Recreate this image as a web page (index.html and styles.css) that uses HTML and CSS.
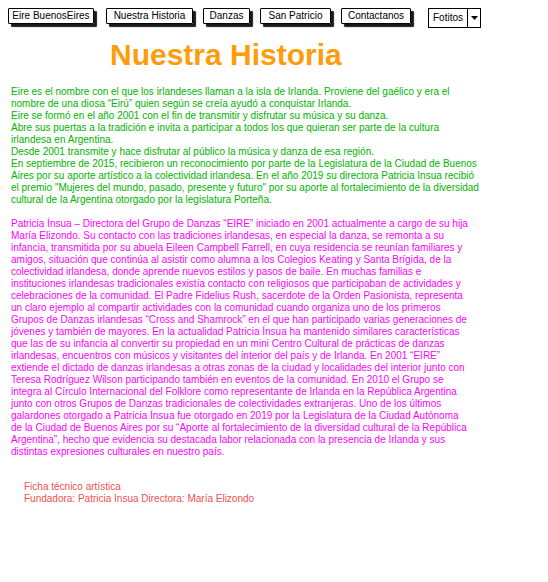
FILE: index.html
```html
<!DOCTYPE html>
<html lang="es">
<head>
<meta charset="utf-8">
<title>Nuestra Historia</title>
<link rel="stylesheet" href="styles.css">
</head>
<body>
<nav class="nav">
  <a class="btn btn-home">Eire BuenosEires</a>
  <a class="btn btn-historia">Nuestra Historia</a>
  <a class="btn btn-danzas">Danzas</a>
  <a class="btn btn-patricio">San Patricio</a>
  <a class="btn btn-contacto">Contactanos</a>
  <div class="select"><span class="select-label">Fotitos</span><span class="select-arrow"><svg width="7" height="4" viewBox="0 0 7 4"><path d="M0 0H7L3.5 4Z" fill="#000"/></svg></span></div>
</nav>
<h1 class="title">Nuestra Historia</h1>
<p class="text green">Eire es el nombre con el que los irlandeses llaman a la isla de Irlanda. Proviene del gaélico y era el<br>
nombre de una diosa “Eirú” quien según se creía ayudó a conquistar Irlanda.<br>
Eire se formó en el año 2001 con el fin de transmitir y disfrutar su música y su danza.<br>
Abre sus puertas a la tradición e invita a participar a todos los que quieran ser parte de la cultura<br>
irlandesa en Argentina.<br>
Desde 2001 transmite y hace disfrutar al público la música y danza de esa región.<br>
En septiembre de 2015, recibieron un reconocimiento por parte de la Legislatura de la Ciudad de Buenos<br>
Aires por su aporte artístico a la colectividad irlandesa. En el año 2019 su directora Patricia Insua recibió<br>
el premio "Mujeres del mundo, pasado, presente y futuro" por su aporte al fortalecimiento de la diversidad<br>
cultural de la Argentina otorgado por la legislatura Porteña.</p>
<p class="text magenta">Patricia Ínsua – Directora del Grupo de Danzas “EIRE” iniciado en 2001 actualmente a cargo de su hija<br>
María Elizondo. Su contacto con las tradiciones irlandesas, en especial la danza, se remonta a su<br>
infancia, transmitida por su abuela Eileen Campbell Farrell, en cuya residencia se reunían familiares y<br>
amigos, situación que continúa al asistir como alumna a los Colegios Keating y Santa Brígida, de la<br>
colectividad irlandesa, donde aprende nuevos estilos y pasos de baile. En muchas familias e<br>
instituciones irlandesas tradicionales existía contacto con religiosos que participaban de actividades y<br>
celebraciones de la comunidad. El Padre Fidelius Rush, sacerdote de la Orden Pasionista, representa<br>
un claro ejemplo al compartir actividades con la comunidad cuando organiza uno de los primeros<br>
Grupos de Danzas irlandesas “Cross and Shamrock” en el que han participado varias generaciones de<br>
jóvenes y también de mayores. En la actualidad Patricia Ínsua ha mantenido similares características<br>
que las de su infancia al convertir su propiedad en un mini Centro Cultural de prácticas de danzas<br>
irlandesas, encuentros con músicos y visitantes del interior del país y de Irlanda. En 2001 “EIRE”<br>
extiende el dictado de danzas irlandesas a otras zonas de la ciudad y localidades del interior junto con<br>
Teresa Rodríguez Wilson participando también en eventos de la comunidad. En 2010 el Grupo se<br>
integra al Círculo Internacional del Folklore como representante de Irlanda en la República Argentina<br>
junto con otros Grupos de Danzas tradicionales de colectividades extranjeras. Uno de los últimos<br>
galardones otorgado a Patricia Ínsua fue otorgado en 2019 por la Legislatura de la Ciudad Autónoma<br>
de la Ciudad de Buenos Aires por su “Aporte al fortalecimiento de la diversidad cultural de la República<br>
Argentina”, hecho que evidencia su destacada labor relacionada con la presencia de Irlanda y sus<br>
distintas expresiones culturales en nuestro país.</p>
<div class="credits">
  <div>Ficha técnico artística</div>
  <div>Fundadora: Patricia Insua Directora: María Elizondo</div>
</div>
</body>
</html>
```
FILE: styles.css
```css
html, body {
  background: #fff;
}
body {
  margin: 8px;
  font-family: "Liberation Sans", Arial, sans-serif;
}
.nav {
  display: flex;
  align-items: flex-start;
  gap: 10px;
}
.btn {
  display: block;
  box-sizing: border-box;
  height: 16px;
  border: 1px solid #000;
  border-radius: 1px;
  box-shadow: 3px 3px 1px #1a1a1a;
  font-size: 10px;
  line-height: 14px;
  text-align: center;
  color: #000;
  white-space: nowrap;
}
.btn-home { width: 86px; margin-right: 2px; }
.btn-historia { width: 87px; }
.btn-danzas { width: 47px; }
.btn-patricio { width: 71px; }
.btn-contacto { width: 70px; }
.select {
  margin-left: 7px;
  display: flex;
  box-sizing: border-box;
  width: 53px;
  height: 20px;
  border: 1px solid #000;
  font-size: 10px;
  line-height: 18px;
}
.select-label {
  flex: 1;
  text-align: center;
}
.select-arrow {
  display: flex;
  align-items: center;
  justify-content: center;
  width: 12px;
  border-left: 1px solid #000;
}
.title {
  margin: 10px 0 0 102px;
  font-size: 30px;
  line-height: 34px;
  font-weight: bold;
  color: #ff9c0a;
}
.text {
  margin: 14px 0 0 3px;
  font-size: 10px;
  line-height: 12px;
  white-space: nowrap;
}
.green {
  color: #00b400;
}
.magenta {
  margin-top: 12px;
  color: #ff00ff;
}
.credits {
  margin: 23px 0 0 16px;
  font-size: 10px;
  line-height: 12px;
  color: #f05050;
}
```
